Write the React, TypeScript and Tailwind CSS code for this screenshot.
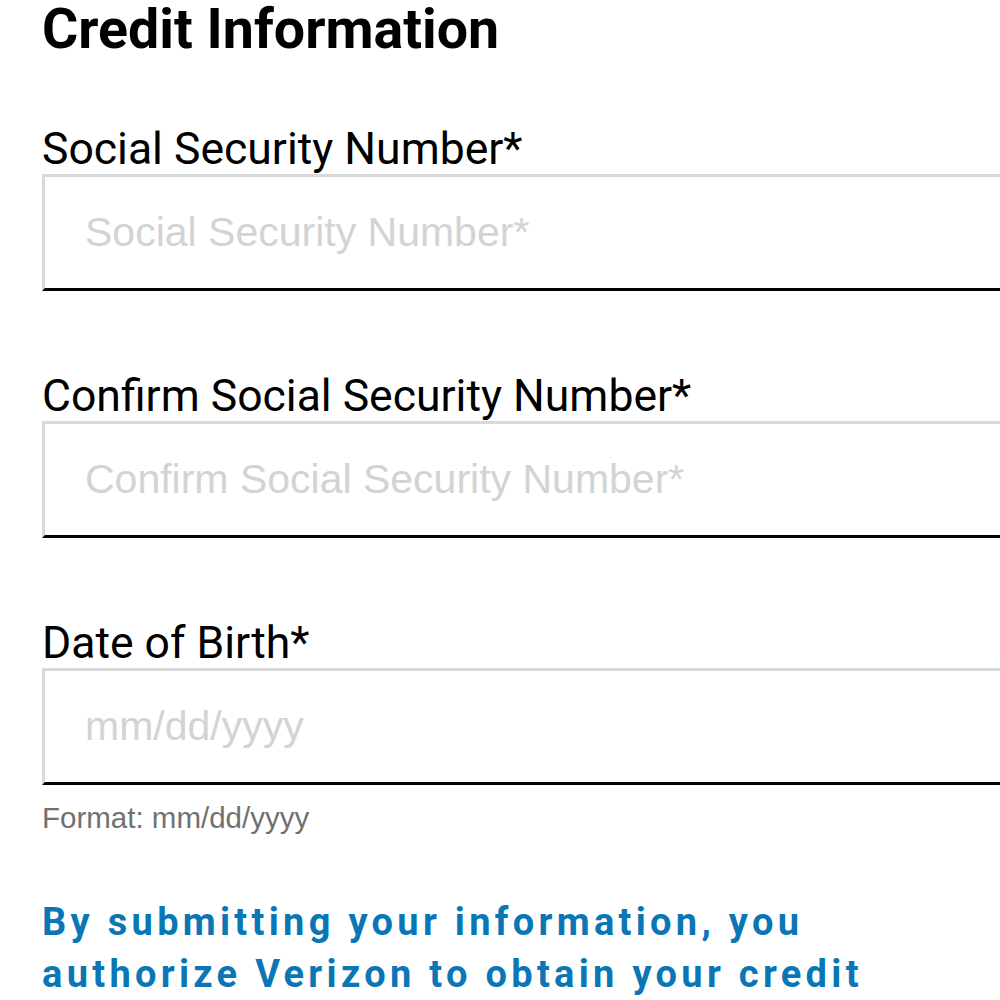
import React from "react";

const roboto = "font-['Roboto',Arial,sans-serif]";
const helv = "font-['Liberation_Sans',Arial,sans-serif]";

function Field({ label, placeholder, first }: { label: string; placeholder: string; first?: boolean }) {
  return (
    <div className={first ? "mt-[69px]" : "mt-[83px]"}>
      <label className={`block ${roboto} text-[44.5px] leading-[45px] text-black`}>{label}</label>
      <input
        type="text"
        placeholder={placeholder}
        className={`mt-[2px] block h-[117px] w-[1060px] border-t-[3px] border-l-[3px] border-b-[3px] border-r-0 border-t-[#d8dada] border-l-[#d8dada] border-b-black bg-white pl-[40px] ${helv} text-[41px] text-black outline-none placeholder:text-[#d2d4d4]`}
      />
    </div>
  );
}

export default function App() {
  return (
    <div className="min-h-screen w-full overflow-hidden bg-white">
      <div className="w-[958px] pl-[42px] pt-[2px]">
        <h1 className={`${roboto} text-[55.5px] font-bold leading-[56px] text-black`}>Credit Information</h1>
        <Field first label="Social Security Number*" placeholder="Social Security Number*" />
        <Field label="Confirm Social Security Number*" placeholder="Confirm Social Security Number*" />
        <Field label="Date of Birth*" placeholder="mm/dd/yyyy" />
        <p className={`mt-[18px] ${helv} text-[29.5px] leading-[29px] text-[#6f7171]`}>Format: mm/dd/yyyy</p>
        <p className={`mt-[64px] ${roboto} text-[38px] font-bold leading-[52px] tracking-[4.3px] text-[#0a76b5]`}>
          By submitting your information, you authorize Verizon to obtain your credit report and verify your identity.
        </p>
      </div>
    </div>
  );
}
